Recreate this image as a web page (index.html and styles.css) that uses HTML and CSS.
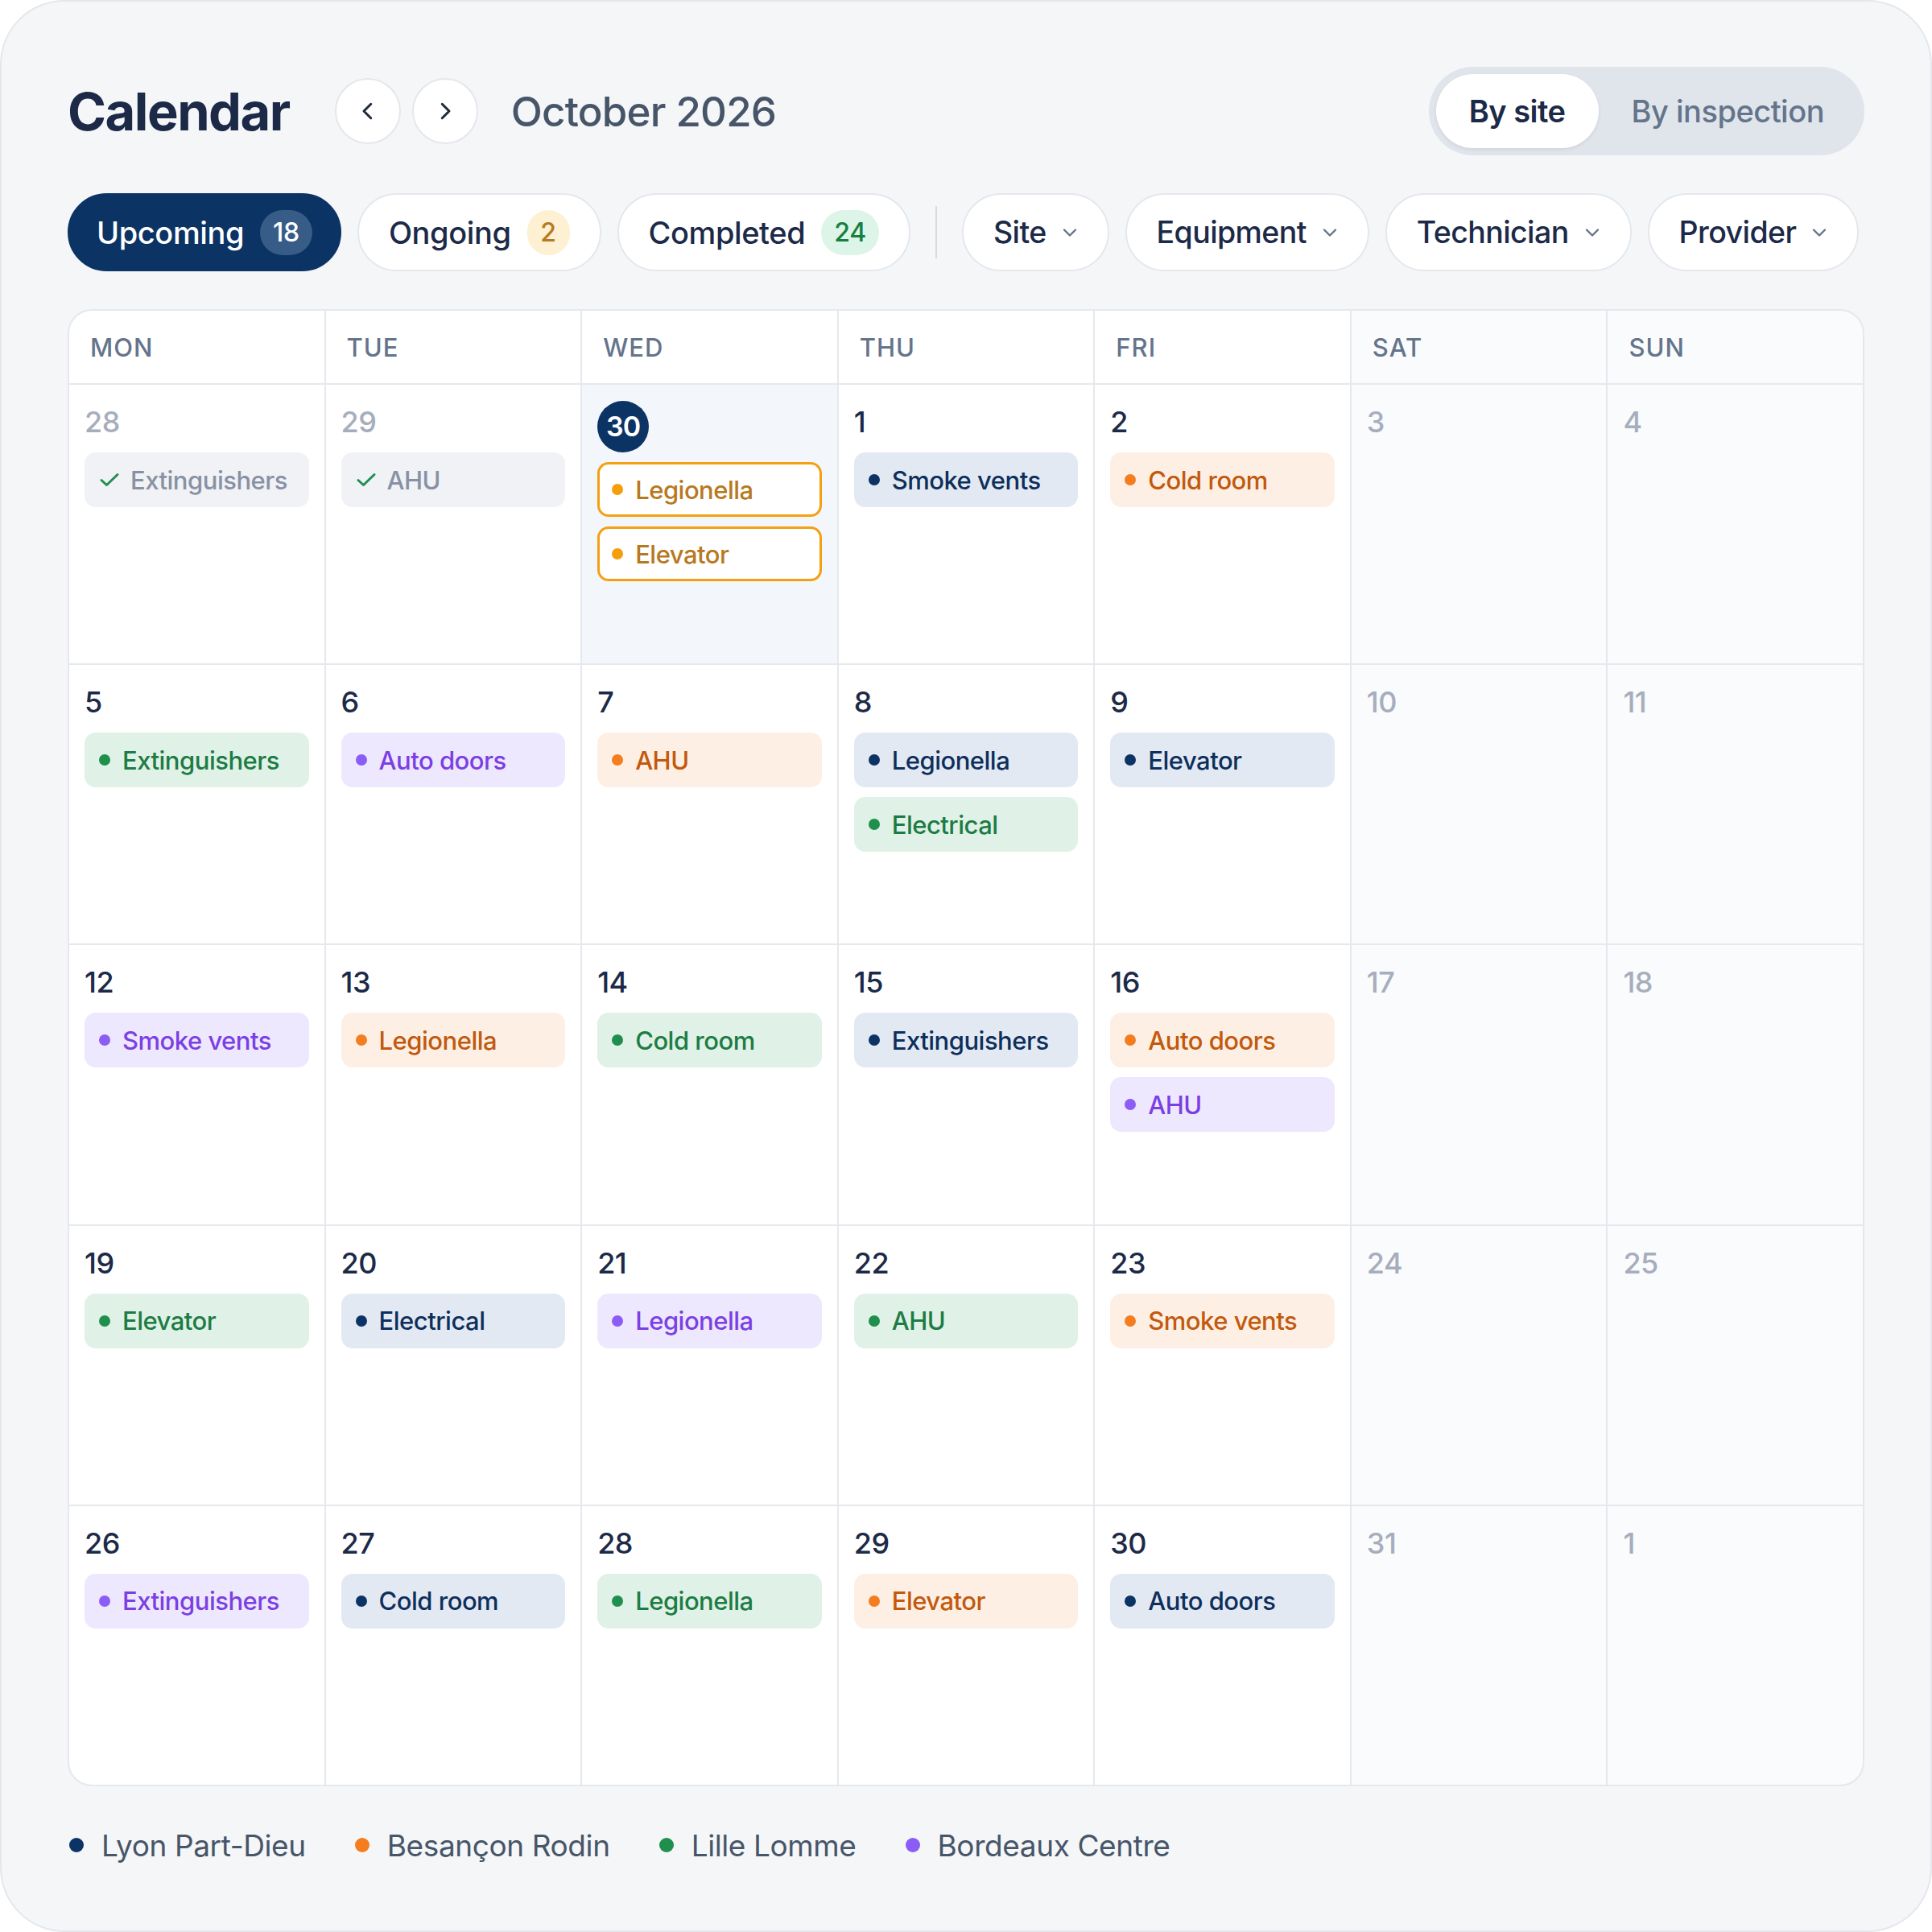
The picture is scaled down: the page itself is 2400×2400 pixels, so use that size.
FILE: index.html
```html
<!DOCTYPE html>
<html lang="en">
<head>
<meta charset="utf-8">
<title>Calendar</title>
<link rel="stylesheet" href="styles.css">
</head>
<body>
<div class="card">
  <header class="top">
    <div class="top-left">
      <h1 class="title">Calendar</h1>
      <div class="nav">
        <button class="nav-btn" aria-label="Previous"><svg viewBox="0 0 24 24" width="30" height="30"><path d="M15 5 L8 12 L15 19" fill="none" stroke="#1e293b" stroke-width="2.4" stroke-linecap="round" stroke-linejoin="round"/></svg></button>
        <button class="nav-btn" aria-label="Next"><svg viewBox="0 0 24 24" width="30" height="30"><path d="M9 5 L16 12 L9 19" fill="none" stroke="#1e293b" stroke-width="2.4" stroke-linecap="round" stroke-linejoin="round"/></svg></button>
      </div>
      <div class="month">October 2026</div>
    </div>
    <div class="toggle">
      <span class="tg active">By site</span>
      <span class="tg">By inspection</span>
    </div>
  </header>

  <div class="filters">
    <span class="pill primary">Upcoming <span class="badge b-up">18</span></span>
    <span class="pill">Ongoing <span class="badge b-on">2</span></span>
    <span class="pill">Completed <span class="badge b-done">24</span></span>
    <span class="divider"></span>
    <span class="pill drop">Site <svg class="chev" viewBox="0 0 20 12" width="20" height="12"><path d="M3 2.5 L10 9.5 L17 2.5" fill="none" stroke="#64748b" stroke-width="2.4" stroke-linecap="round" stroke-linejoin="round"/></svg></span>
    <span class="pill drop">Equipment <svg class="chev" viewBox="0 0 20 12" width="20" height="12"><path d="M3 2.5 L10 9.5 L17 2.5" fill="none" stroke="#64748b" stroke-width="2.4" stroke-linecap="round" stroke-linejoin="round"/></svg></span>
    <span class="pill drop">Technician <svg class="chev" viewBox="0 0 20 12" width="20" height="12"><path d="M3 2.5 L10 9.5 L17 2.5" fill="none" stroke="#64748b" stroke-width="2.4" stroke-linecap="round" stroke-linejoin="round"/></svg></span>
    <span class="pill drop">Provider <svg class="chev" viewBox="0 0 20 12" width="20" height="12"><path d="M3 2.5 L10 9.5 L17 2.5" fill="none" stroke="#64748b" stroke-width="2.4" stroke-linecap="round" stroke-linejoin="round"/></svg></span>
  </div>

  <div class="grid">
    <div class="hd">MON</div>
    <div class="hd">TUE</div>
    <div class="hd">WED</div>
    <div class="hd">THU</div>
    <div class="hd">FRI</div>
    <div class="hd we">SAT</div>
    <div class="hd we">SUN</div>

    <!-- week 1 -->
    <div class="cell"><div class="day muted">28</div>
      <div class="ev done"><svg class="check" viewBox="0 0 26 20" width="26" height="20"><path d="M3 10.5 L9.5 16.5 L23 3.5" fill="none" stroke="#1f8f4e" stroke-width="3" stroke-linecap="round" stroke-linejoin="round"/></svg>Extinguishers</div></div>
    <div class="cell"><div class="day muted">29</div>
      <div class="ev done"><svg class="check" viewBox="0 0 26 20" width="26" height="20"><path d="M3 10.5 L9.5 16.5 L23 3.5" fill="none" stroke="#1f8f4e" stroke-width="3" stroke-linecap="round" stroke-linejoin="round"/></svg>AHU</div></div>
    <div class="cell today"><div class="day today-num">30</div>
      <div class="ev now"><i class="dot"></i>Legionella</div>
      <div class="ev now"><i class="dot"></i>Elevator</div></div>
    <div class="cell"><div class="day">1</div>
      <div class="ev navy"><i class="dot"></i>Smoke vents</div></div>
    <div class="cell"><div class="day">2</div>
      <div class="ev orange"><i class="dot"></i>Cold room</div></div>
    <div class="cell we"><div class="day muted">3</div></div>
    <div class="cell we"><div class="day muted">4</div></div>

    <!-- week 2 -->
    <div class="cell"><div class="day">5</div>
      <div class="ev green"><i class="dot"></i>Extinguishers</div></div>
    <div class="cell"><div class="day">6</div>
      <div class="ev purple"><i class="dot"></i>Auto doors</div></div>
    <div class="cell"><div class="day">7</div>
      <div class="ev orange"><i class="dot"></i>AHU</div></div>
    <div class="cell"><div class="day">8</div>
      <div class="ev navy"><i class="dot"></i>Legionella</div>
      <div class="ev green"><i class="dot"></i>Electrical</div></div>
    <div class="cell"><div class="day">9</div>
      <div class="ev navy"><i class="dot"></i>Elevator</div></div>
    <div class="cell we"><div class="day muted">10</div></div>
    <div class="cell we"><div class="day muted">11</div></div>

    <!-- week 3 -->
    <div class="cell"><div class="day">12</div>
      <div class="ev purple"><i class="dot"></i>Smoke vents</div></div>
    <div class="cell"><div class="day">13</div>
      <div class="ev orange"><i class="dot"></i>Legionella</div></div>
    <div class="cell"><div class="day">14</div>
      <div class="ev green"><i class="dot"></i>Cold room</div></div>
    <div class="cell"><div class="day">15</div>
      <div class="ev navy"><i class="dot"></i>Extinguishers</div></div>
    <div class="cell"><div class="day">16</div>
      <div class="ev orange"><i class="dot"></i>Auto doors</div>
      <div class="ev purple"><i class="dot"></i>AHU</div></div>
    <div class="cell we"><div class="day muted">17</div></div>
    <div class="cell we"><div class="day muted">18</div></div>

    <!-- week 4 -->
    <div class="cell"><div class="day">19</div>
      <div class="ev green"><i class="dot"></i>Elevator</div></div>
    <div class="cell"><div class="day">20</div>
      <div class="ev navy"><i class="dot"></i>Electrical</div></div>
    <div class="cell"><div class="day">21</div>
      <div class="ev purple"><i class="dot"></i>Legionella</div></div>
    <div class="cell"><div class="day">22</div>
      <div class="ev green"><i class="dot"></i>AHU</div></div>
    <div class="cell"><div class="day">23</div>
      <div class="ev orange"><i class="dot"></i>Smoke vents</div></div>
    <div class="cell we"><div class="day muted">24</div></div>
    <div class="cell we"><div class="day muted">25</div></div>

    <!-- week 5 -->
    <div class="cell"><div class="day">26</div>
      <div class="ev purple"><i class="dot"></i>Extinguishers</div></div>
    <div class="cell"><div class="day">27</div>
      <div class="ev navy"><i class="dot"></i>Cold room</div></div>
    <div class="cell"><div class="day">28</div>
      <div class="ev green"><i class="dot"></i>Legionella</div></div>
    <div class="cell"><div class="day">29</div>
      <div class="ev orange"><i class="dot"></i>Elevator</div></div>
    <div class="cell"><div class="day">30</div>
      <div class="ev navy"><i class="dot"></i>Auto doors</div></div>
    <div class="cell we"><div class="day muted">31</div></div>
    <div class="cell we"><div class="day muted">1</div></div>
  </div>

  <div class="legend">
    <span class="lg"><i class="ldot l-navy"></i>Lyon Part-Dieu</span>
    <span class="lg"><i class="ldot l-orange"></i>Besançon Rodin</span>
    <span class="lg"><i class="ldot l-green"></i>Lille Lomme</span>
    <span class="lg"><i class="ldot l-purple"></i>Bordeaux Centre</span>
  </div>
</div>
</body>
</html>
```

FILE: styles.css
```css
* { box-sizing: border-box; }
html, body { margin: 0; padding: 0; background: #ffffff; }
body {
  font-family: Inter, "Noto Sans", "Liberation Sans", sans-serif;
  color: #1e293b;
}
.card {
  width: 2400px;
  height: 2400px;
  background: #f5f6f8;
  border: 2px solid #e4e7ec;
  border-radius: 80px;
  padding: 81px 82px 80px 82px;
  display: flex;
  flex-direction: column;
  gap: 47px;
}

/* header */
.top {
  display: flex;
  align-items: center;
  justify-content: space-between;
  height: 110px;
  flex: none;
}
.top-left { display: flex; align-items: center; }
.title {
  margin: 0;
  font-size: 65px;
  font-weight: 700;
  letter-spacing: -1.5px;
  color: #1c2a48;
}
.nav { display: flex; gap: 14px; margin-left: 56px; }
.nav-btn {
  width: 82px; height: 82px;
  border-radius: 50%;
  background: #ffffff;
  border: 2px solid #e4e7ec;
  display: flex; align-items: center; justify-content: center;
  padding: 0;
}
.month {
  margin-left: 41px;
  font-size: 51px;
  font-weight: 500;
  letter-spacing: -0.8px;
  color: #475569;
}
.toggle {
  display: flex;
  align-items: center;
  height: 110px;
  padding: 9px;
  border-radius: 55px;
  background: #e0e5ec;
}
.tg {
  height: 92px;
  display: flex; align-items: center;
  padding: 0 41px;
  border-radius: 46px;
  font-size: 38px;
  font-weight: 500;
  color: #64748b;
  letter-spacing: -0.5px;
}
.tg.active {
  background: #ffffff;
  color: #1c2a48;
  font-weight: 600;
  box-shadow: 0 2px 4px rgba(15, 23, 42, 0.08);
}

/* filters */
.filters {
  display: flex;
  align-items: center;
  gap: 20px;
  height: 97px;
  flex: none;
}
.pill {
  flex: none;
  height: 97px;
  display: flex;
  align-items: center;
  gap: 20px;
  padding: 0 37px;
  border-radius: 49px;
  background: #ffffff;
  border: 2px solid #e4e7ec;
  font-size: 38px;
  font-weight: 500;
  color: #1c2a48;
  letter-spacing: -0.4px;
}
.pill.primary {
  background: #0b3364;
  border-color: #0b3364;
  color: #ffffff;
  padding: 0 34px;
}
.pill.drop { gap: 19px; font-size: 37.5px; letter-spacing: -0.6px; }
.badge {
  height: 56px;
  min-width: 53px;
  padding: 0 16px;
  border-radius: 28px;
  display: flex; align-items: center; justify-content: center;
  font-size: 32px;
  font-weight: 500;
  letter-spacing: -0.3px;
}
.b-up { background: #365c87; color: #ffffff; }
.b-on { background: #fdf0d3; color: #b7791f; padding: 0; }
.b-done { background: #dcf5e8; color: #15803d; }
.divider {
  flex: none;
  width: 2px;
  height: 65px;
  background: #d6dae1;
  margin: 0 11px;
}
.chev { display: block; flex: none; }

/* grid */
.grid {
  flex: 1;
  display: grid;
  grid-template-columns: repeat(7, 1fr);
  grid-template-rows: 90px repeat(5, 1fr);
  gap: 2px;
  background: #e6e8ed;
  border: 2px solid #e6e8ed;
  border-radius: 30px;
  overflow: hidden;
}
.hd {
  background: #ffffff;
  display: flex;
  align-items: center;
  padding-left: 26px;
  font-size: 31px;
  font-weight: 500;
  letter-spacing: 1px;
  color: #64748b;
}
.hd.we { background: #fafbfc; }
.cell {
  background: #ffffff;
  padding: 20px 19px;
  display: flex;
  flex-direction: column;
  gap: 12px;
  min-width: 0;
}
.cell.we { background: #fafbfc; }
.cell.today { background: #f3f6fa; }
.day {
  font-size: 36px;
  line-height: 52px;
  font-weight: 500;
  color: #1c2a48;
  letter-spacing: -0.5px;
}
.day.muted { color: #a6aebd; }
.day.today-num {
  width: 64px; height: 64px;
  border-radius: 50%;
  background: #0b3364;
  color: #ffffff;
  display: flex; align-items: center; justify-content: center;
  font-size: 34px;
  font-weight: 600;
  letter-spacing: -1px;
}
.ev {
  height: 68px;
  border-radius: 14px;
  display: flex;
  align-items: center;
  gap: 15px;
  padding: 0 18px;
  font-size: 31px;
  font-weight: 500;
  letter-spacing: -0.5px;
  white-space: nowrap;
}
.dot {
  width: 14px; height: 14px;
  border-radius: 50%;
  flex: none;
}
.check { flex: none; display: block; margin-right: -2px; }
.ev.done { background: #f0f2f6; color: #8891a4; }
.ev.now { background: #ffffff; border: 3px solid #f4a012; color: #b87820; padding-left: 15px; }
.ev.now .dot { background: #f59e0b; }
.ev.navy { background: #e3e9f2; color: #0d2f5c; }
.ev.navy .dot { background: #0b3364; }
.ev.orange { background: #fdefe4; color: #c2590c; }
.ev.orange .dot { background: #f47d1f; }
.ev.green { background: #e0f1e7; color: #1c7c44; }
.ev.green .dot { background: #1f8f4e; }
.ev.purple { background: #ede8fd; color: #7b3fe4; }
.ev.purple .dot { background: #8b5cf6; }

/* legend */
.legend {
  display: flex;
  align-items: center;
  gap: 61px;
  height: 52px;
  padding-left: 2px;
  flex: none;
}
.lg {
  display: flex;
  align-items: center;
  gap: 22px;
  font-size: 37px;
  font-weight: 400;
  color: #475569;
  letter-spacing: -0.4px;
}
.ldot { width: 18px; height: 18px; border-radius: 50%; flex: none; }
.l-navy { background: #0b3364; }
.l-orange { background: #f47d1f; }
.l-green { background: #1f8f4e; }
.l-purple { background: #8b5cf6; }
```
